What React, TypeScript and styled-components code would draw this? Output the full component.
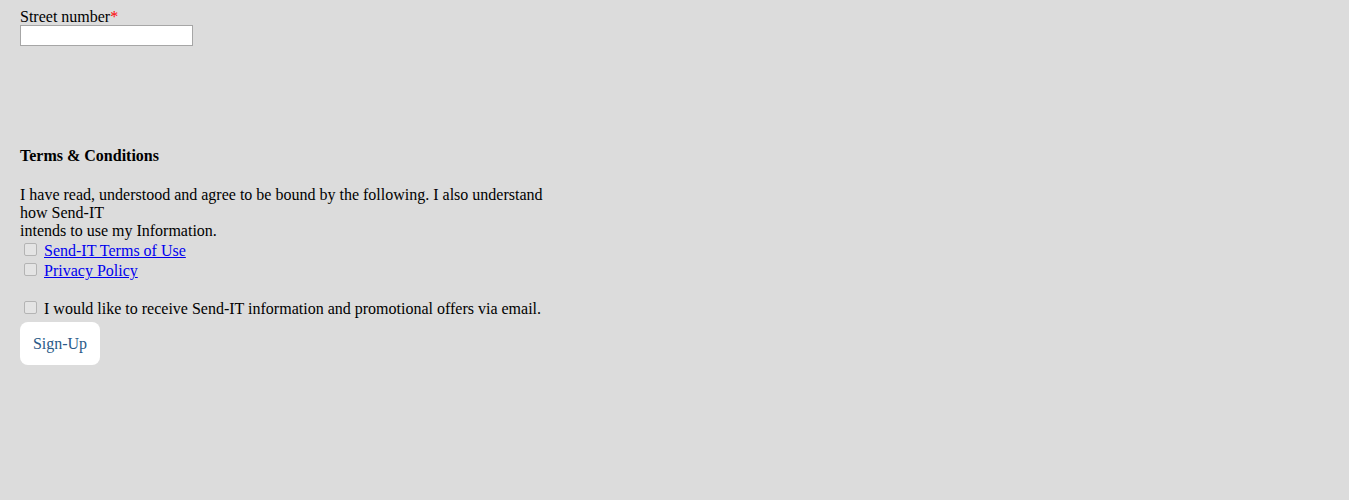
import React from 'react';
import styled, { createGlobalStyle } from 'styled-components';

const GlobalStyle = createGlobalStyle`
  html, body {
    margin: 0;
    background: #dcdcdc;
  }
  body {
    font-family: "Liberation Serif", "Times New Roman", serif;
    font-size: 16px;
    color: #000;
  }
`;

const Page = styled.div`
  padding: 8px 20px;
  min-height: 500px;
  box-sizing: border-box;
`;

const Field = styled.div`
  display: flex;
  flex-direction: column;
  align-items: flex-start;
`;

const Label = styled.label`
  line-height: 17px;
`;

const Required = styled.span`
  color: #ff0000;
`;

const TextInput = styled.input`
  width: 173px;
  height: 21px;
  box-sizing: border-box;
  border: 1px solid #a6a6a6;
  background: #fff;
  padding: 1px 2px;
  margin: 0;
`;

const Terms = styled.section`
  margin-top: 101px;
  width: 540px;
`;

const Heading = styled.h4`
  margin: 0 0 21px;
  font-size: 16px;
  font-weight: bold;
  line-height: 18px;
`;

const Paragraph = styled.p`
  margin: 0 0 1px;
  line-height: 18px;
`;

const CheckRow = styled.div<{ $gapTop?: number }>`
  display: flex;
  align-items: center;
  height: 20px;
  margin-top: ${p => p.$gapTop || 0}px;
  white-space: nowrap;
`;

const Check = styled.input.attrs({ type: 'checkbox', disabled: true })`
  appearance: none;
  box-sizing: border-box;
  width: 13px;
  height: 13px;
  margin: 0 7px 3px 4px;
  border: 1px solid #b4b4b4;
  border-radius: 2px;
  background: #e4e4e4;
`;

const Link = styled.a`
  color: #0000ee;
  text-decoration: underline;
`;

const SignUp = styled.button`
  margin-top: 3px;
  width: 80px;
  height: 43px;
  border: none;
  border-radius: 8px;
  background: #fff;
  color: #2a5a88;
  font-family: "Liberation Serif", "Times New Roman", serif;
  font-size: 16px;
  padding: 0;
`;

export default function App() {
  return (
    <>
      <GlobalStyle />
      <Page>
        <Field>
          <Label>
            Street number<Required>*</Required>
          </Label>
          <TextInput type="text" />
        </Field>
        <Terms>
          <Heading>Terms &amp; Conditions</Heading>
          <Paragraph>
            I have read, understood and agree to be bound by the following. I also understand how Send-IT
            <br />
            intends to use my Information.
          </Paragraph>
          <CheckRow>
            <Check />
            <Link href="#">Send-IT Terms of Use</Link>
          </CheckRow>
          <CheckRow>
            <Check />
            <Link href="#">Privacy Policy</Link>
          </CheckRow>
          <CheckRow $gapTop={18}>
            <Check />
            I would like to receive Send-IT information and promotional offers via email.
          </CheckRow>
          <SignUp>Sign-Up</SignUp>
        </Terms>
      </Page>
    </>
  );
}
